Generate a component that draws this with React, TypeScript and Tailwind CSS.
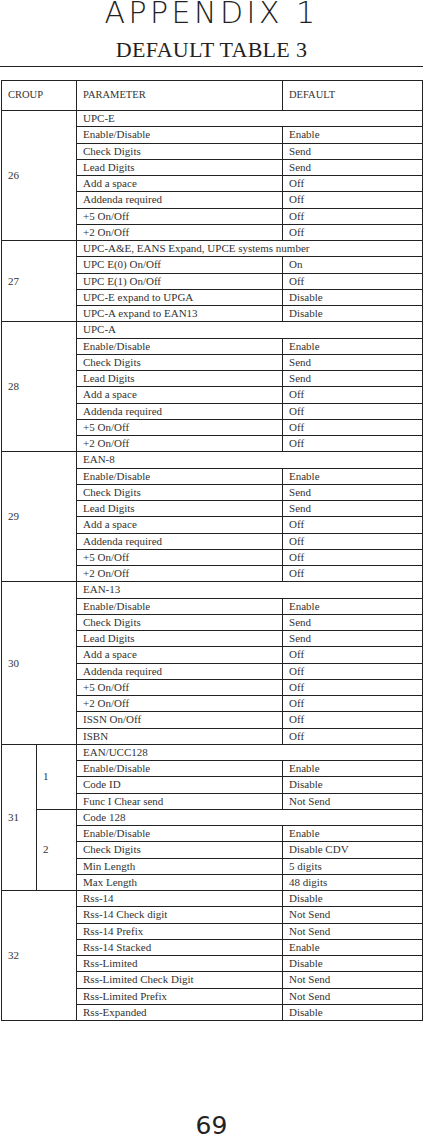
import React from 'react';

type Row = { param: string; value?: string; title?: boolean };
type Section = { sub?: string; rows: Row[] };
type Group = { id: string; sections: Section[] };

const std = (title: string, extra: Row[] = []): Row[] => [
    { param: title, title: true },
    { param: 'Enable/Disable', value: 'Enable' },
    { param: 'Check Digits', value: 'Send' },
    { param: 'Lead Digits', value: 'Send' },
    { param: 'Add a space', value: 'Off' },
    { param: 'Addenda required', value: 'Off' },
    { param: '+5 On/Off', value: 'Off' },
    { param: '+2 On/Off', value: 'Off' },
    ...extra,
];

const groups: Group[] = [
    { id: '26', sections: [{ rows: std('UPC-E') }] },
    {
        id: '27',
        sections: [
            {
                rows: [
                    { param: 'UPC-A&E, EANS Expand, UPCE systems number', title: true },
                    { param: 'UPC E(0) On/Off', value: 'On' },
                    { param: 'UPC E(1) On/Off', value: 'Off' },
                    { param: 'UPC-E expand to UPGA', value: 'Disable' },
                    { param: 'UPC-A expand to EAN13', value: 'Disable' },
                ],
            },
        ],
    },
    { id: '28', sections: [{ rows: std('UPC-A') }] },
    { id: '29', sections: [{ rows: std('EAN-8') }] },
    {
        id: '30',
        sections: [
            {
                rows: std('EAN-13', [
                    { param: 'ISSN On/Off', value: 'Off' },
                    { param: 'ISBN', value: 'Off' },
                ]),
            },
        ],
    },
    {
        id: '31',
        sections: [
            {
                sub: '1',
                rows: [
                    { param: 'EAN/UCC128', title: true },
                    { param: 'Enable/Disable', value: 'Enable' },
                    { param: 'Code ID', value: 'Disable' },
                    { param: 'Func I Chear send', value: 'Not Send' },
                ],
            },
            {
                sub: '2',
                rows: [
                    { param: 'Code 128', title: true },
                    { param: 'Enable/Disable', value: 'Enable' },
                    { param: 'Check Digits', value: 'Disable CDV' },
                    { param: 'Min Length', value: '5 digits' },
                    { param: 'Max Length', value: '48 digits' },
                ],
            },
        ],
    },
    {
        id: '32',
        sections: [
            {
                rows: [
                    { param: 'Rss-14', value: 'Disable' },
                    { param: 'Rss-14 Check digit', value: 'Not Send' },
                    { param: 'Rss-14 Prefix', value: 'Not Send' },
                    { param: 'Rss-14 Stacked', value: 'Enable' },
                    { param: 'Rss-Limited', value: 'Disable' },
                    { param: 'Rss-Limited Check Digit', value: 'Not Send' },
                    { param: 'Rss-Limited Prefix', value: 'Not Send' },
                    { param: 'Rss-Expanded', value: 'Disable' },
                ],
            },
        ],
    },
];

const cell = 'border border-[#222] px-[6px] align-middle whitespace-nowrap';

export default function App() {
    return (
        <div className="w-[423px] bg-white text-[#333] font-['Liberation_Serif',serif]">
            <h1 className="text-center font-['DejaVu_Sans',sans-serif] font-extralight text-[30px] leading-[26px] tracking-[3.5px] text-[#222]">
                APPENDIX 1
            </h1>
            <h2 className="mt-[10px] text-center text-[22px] leading-[28px] tracking-[0.3px] text-[#222]">DEFAULT TABLE 3</h2>
            <div className="mt-[2px] border-t border-[#222]" />

            <table className="mt-[13px] mx-px w-[421px] table-fixed border-collapse text-[11px] leading-none">
                <colgroup>
                    <col className="w-[35px]" />
                    <col className="w-[40px]" />
                    <col className="w-[206px]" />
                    <col className="w-[140px]" />
                </colgroup>
                <thead>
                    <tr className="h-[30px] text-left text-[10.5px]">
                        <th colSpan={2} className={`${cell} font-normal`}>CROUP</th>
                        <th className={`${cell} font-normal`}>PARAMETER</th>
                        <th className={`${cell} font-normal`}>DEFAULT</th>
                    </tr>
                </thead>
                <tbody>
                    {groups.map((g) => {
                        const total = g.sections.reduce((n, s) => n + s.rows.length, 0);
                        const split = g.sections.some((s) => s.sub);
                        return g.sections.map((s, si) =>
                            s.rows.map((r, ri) => (
                                <tr key={`${g.id}-${si}-${ri}`} className="h-[16.25px]">
                                    {si === 0 && ri === 0 && (
                                        <td rowSpan={total} colSpan={split ? 1 : 2} className={cell}>
                                            {g.id}
                                        </td>
                                    )}
                                    {split && ri === 0 && (
                                        <td rowSpan={s.rows.length} className={cell}>
                                            {s.sub}
                                        </td>
                                    )}
                                    {r.title ? (
                                        <td colSpan={2} className={cell}>
                                            {r.param}
                                        </td>
                                    ) : (
                                        <>
                                            <td className={cell}>{r.param}</td>
                                            <td className={cell}>{r.value}</td>
                                        </>
                                    )}
                                </tr>
                            ))
                        );
                    })}
                </tbody>
            </table>

            <div className="mt-[92px] text-center font-['DejaVu_Sans',sans-serif] text-[25px] leading-[25px] text-[#222]">
                69
            </div>
        </div>
    );
}
